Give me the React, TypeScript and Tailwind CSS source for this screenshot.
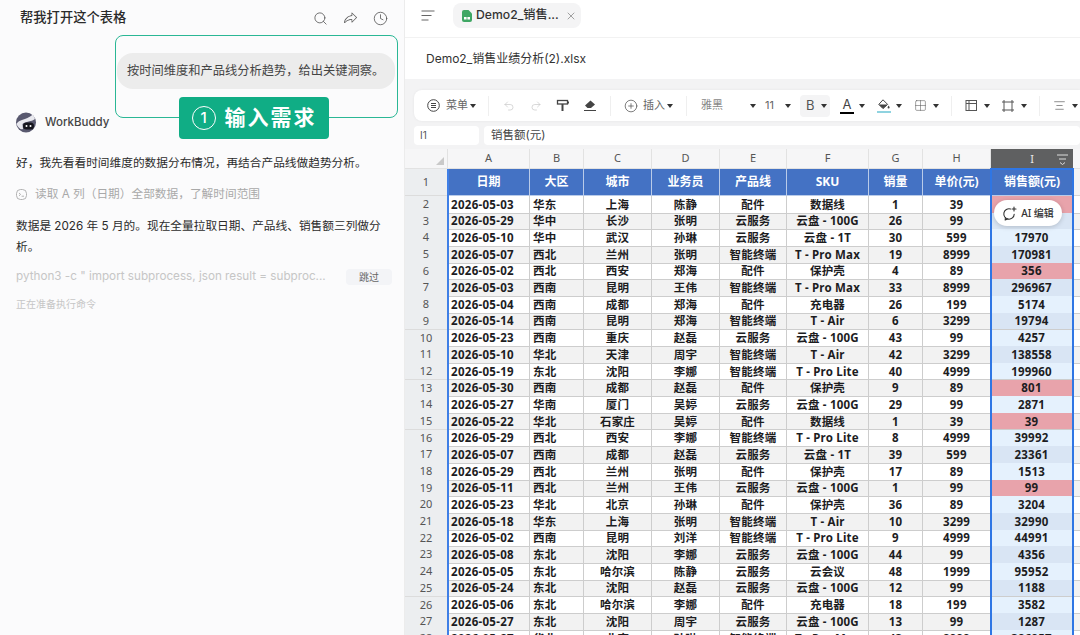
import React from 'react';
import { Search, Clock, X, Undo2, Redo2, CirclePlus, Grid2x2, AlignCenter } from 'lucide-react';
import { PiShareFatLight } from 'react-icons/pi';

type Row = [string, string, string, string, string, string, number, number, number];

const rows: Row[] = [
  ['2026-05-03', '华东', '上海', '陈静', '配件', '数据线', 1, 39, 39],
  ['2026-05-29', '华中', '长沙', '张明', '云服务', '云盘 - 100G', 26, 99, 2574],
  ['2026-05-10', '华中', '武汉', '孙琳', '云服务', '云盘 - 1T', 30, 599, 17970],
  ['2026-05-07', '西北', '兰州', '张明', '智能终端', 'T - Pro Max', 19, 8999, 170981],
  ['2026-05-02', '西北', '西安', '郑海', '配件', '保护壳', 4, 89, 356],
  ['2026-05-03', '西南', '昆明', '王伟', '智能终端', 'T - Pro Max', 33, 8999, 296967],
  ['2026-05-04', '西南', '成都', '郑海', '配件', '充电器', 26, 199, 5174],
  ['2026-05-14', '西南', '昆明', '郑海', '智能终端', 'T - Air', 6, 3299, 19794],
  ['2026-05-23', '西南', '重庆', '赵磊', '云服务', '云盘 - 100G', 43, 99, 4257],
  ['2026-05-10', '华北', '天津', '周宇', '智能终端', 'T - Air', 42, 3299, 138558],
  ['2026-05-19', '东北', '沈阳', '李娜', '智能终端', 'T - Pro Lite', 40, 4999, 199960],
  ['2026-05-30', '西南', '成都', '赵磊', '配件', '保护壳', 9, 89, 801],
  ['2026-05-27', '华南', '厦门', '吴婷', '云服务', '云盘 - 100G', 29, 99, 2871],
  ['2026-05-22', '华北', '石家庄', '吴婷', '配件', '数据线', 1, 39, 39],
  ['2026-05-29', '西北', '西安', '李娜', '智能终端', 'T - Pro Lite', 8, 4999, 39992],
  ['2026-05-07', '西南', '成都', '赵磊', '云服务', '云盘 - 1T', 39, 599, 23361],
  ['2026-05-29', '西北', '兰州', '张明', '配件', '保护壳', 17, 89, 1513],
  ['2026-05-11', '西北', '兰州', '王伟', '云服务', '云盘 - 100G', 1, 99, 99],
  ['2026-05-23', '华北', '北京', '孙琳', '配件', '保护壳', 36, 89, 3204],
  ['2026-05-18', '华东', '上海', '张明', '智能终端', 'T - Air', 10, 3299, 32990],
  ['2026-05-02', '西南', '昆明', '刘洋', '智能终端', 'T - Pro Lite', 9, 4999, 44991],
  ['2026-05-08', '东北', '沈阳', '李娜', '云服务', '云盘 - 100G', 44, 99, 4356],
  ['2026-05-05', '东北', '哈尔滨', '陈静', '云服务', '云会议', 48, 1999, 95952],
  ['2026-05-24', '东北', '沈阳', '赵磊', '云服务', '云盘 - 100G', 12, 99, 1188],
  ['2026-05-06', '东北', '哈尔滨', '李娜', '配件', '充电器', 18, 199, 3582],
  ['2026-05-27', '东北', '沈阳', '周宇', '云服务', '云盘 - 100G', 13, 99, 1287],
  ['2026-05-27', '华北', '北京', '孙琳', '智能终端', 'T - Pro Max', 43, 8999, 386957],
];

const columns = ['A', 'B', 'C', 'D', 'E', 'F', 'G', 'H'];
const titles = ['日期', '大区', '城市', '业务员', '产品线', 'SKU', '销量', '单价(元)'];
const gridCols = 'grid grid-cols-[43px_82px_54px_68px_68px_67px_82px_54px_68px_82px_7px]';
const cell = 'flex items-center justify-center border-r border-b border-[#cdcdcd] overflow-hidden whitespace-nowrap';

function Caret({ className = '' }: { className?: string }) {
  return (
    <span className={`inline-block h-0 w-0 border-x-[3px] border-t-[4px] border-x-transparent border-t-[#333] ${className}`} />
  );
}

function Sep({ className = '' }: { className?: string }) {
  return <span className={`h-5 w-px bg-[#efefef] ${className}`} />;
}

function Toolbar() {
  const icon = 'text-[#555]';
  return (
    <div className="ml-[9px] mt-[11px] flex h-[31px] shrink-0 items-center overflow-hidden whitespace-nowrap rounded-l-lg bg-white text-[11px] text-[#666] shadow-[0_0_3px_rgba(0,0,0,0.06)] [&>*]:shrink-0">
      <svg className="ml-[13px]" width="13" height="13" viewBox="0 0 13 13" fill="none" stroke="#444" strokeWidth="1">
        <circle cx="6.5" cy="6.5" r="5.8" />
        <path d="M4 4.5h5M4 6.5h5M4 8.5h5" />
      </svg>
      <span className="ml-[6px]">菜单</span>
      <Caret className="ml-[2px]" />
      <Sep className="ml-[12px]" />
      <Undo2 size={12} strokeWidth={1.3} className="ml-[14px] text-[#c4c4c4]" />
      <Redo2 size={12} strokeWidth={1.3} className="ml-[15px] text-[#c4c4c4]" />
      {/* format painter */}
      <svg className="ml-[14px]" width="13" height="13" viewBox="0 0 13 13" fill="none" stroke="#444" strokeWidth="1.3">
        <rect x="1.5" y="1.5" width="10" height="3.5" />
        <path d="M11.5 3.5H13M6.5 5v2M6.5 7v5" strokeWidth="2" />
      </svg>
      {/* eraser */}
      <svg className="ml-[14px]" width="14" height="13" viewBox="0 0 14 13">
        <path d="M7.5 1.5 12 5.5 8 9H4.5L2 6.5Z" fill="#444" />
        <path d="M1 11.5h12" stroke="#444" strokeWidth="1.2" />
      </svg>
      <Sep className="ml-[13px]" />
      <CirclePlus size={14} strokeWidth={1.3} className={`ml-[13px] ${icon}`} />
      <span className="ml-[5px]">插入</span>
      <Caret className="ml-[2px]" />
      <Sep className="ml-[13px]" />
      <span className="ml-[14px] text-[#888]">雅黑</span>
      <Caret className="ml-[27px]" />
      <span className="ml-[9px] w-[10px]">11</span>
      <Caret className="ml-[10px]" />
      <span className="ml-[9px] flex h-[22px] w-[30px] items-center gap-[6px] rounded bg-[#f4f4f5] pl-[6px] text-[13px] text-[#555]">
        B
        <Caret />
      </span>
      <span className="ml-[10px] flex w-[14px] flex-col items-center text-[13px] leading-[13px] text-[#444]">
        A
        <span className="mt-px h-[2px] w-[14px] bg-black" />
      </span>
      <Caret className="ml-[5px]" />
      <span className="ml-[12px] flex w-[14px] flex-col items-center">
        {/* fill bucket */}
        <svg width="12" height="11" viewBox="0 0 12 11">
          <path d="M5 .8 9.6 5.4 5 9.6.8 5.4Z" fill="none" stroke="#444" />
          <path d="M.8 5.4h8.8L5 9.6Z" fill="#444" />
          <path d="M10.6 6.5c.7 1 1 1.5 1 2a1 1 0 0 1-2 0c0-.5.3-1 1-2Z" fill="#444" />
        </svg>
        <span className="mt-px h-[2px] w-[14px] bg-[#8fd3e0]" />
      </span>
      <Caret className="ml-[5px]" />
      <Grid2x2 size={13} strokeWidth={1} className={`ml-[12px] ${icon}`} />
      <Caret className="ml-[6px]" />
      <Sep className="ml-[12px]" />
      <svg className="ml-[13px]" width="13" height="13" viewBox="0 0 13 13" fill="none" stroke="#555">
        <rect x="1" y="1.5" width="10.5" height="10" />
        <path d="M1 4.5h10.5M4 1.5v10" />
      </svg>
      <Caret className="ml-[6px]" />
      <svg className="ml-[11px]" width="14" height="14" viewBox="0 0 14 14" fill="none" stroke="#555">
        <path d="M1 3h12M1 11h12M3 1v12M11 1v12" />
      </svg>
      <Caret className="ml-[6px]" />
      <Sep className="ml-[12px]" />
      <AlignCenter size={13} strokeWidth={1.2} className={`ml-[13px] ${icon}`} />
      <Caret className="ml-[6px]" />
    </div>
  );
}

function Sheet() {
  return (
    <div className="relative mt-[4px] min-h-0 flex-1 overflow-hidden bg-white [font-family:'Noto_Sans','Noto_Sans_CJK_SC',sans-serif]">
      {/* column letters */}
      <div className={`${gridCols} h-[20px] bg-[#f6f6f7] text-[11px] text-[#555]`}>
        <div className="relative border-r border-b border-[#e2e2e2]">
          <span className="absolute right-[3px] bottom-[3px] h-0 w-0 border-b-[8px] border-l-[8px] border-b-[#c9c9c9] border-l-transparent" />
        </div>
        {columns.map((c) => (
          <div key={c} className="flex items-center justify-center border-r border-b border-[#e2e2e2]">{c}</div>
        ))}
        <div className="relative flex items-center justify-center bg-[#5f6061] text-[#e8e8e8]">
          I
          <svg className="absolute right-[4px] top-[4px]" width="13" height="13" viewBox="0 0 13 13" fill="none" stroke="#ddd">
            <path d="M1 2h11M3 6h7M4 9.5l2.5 2 2.5-2" />
          </svg>
        </div>
        <div className="border-b border-[#e2e2e2]" />
      </div>
      {/* title row */}
      <div className={`${gridCols} h-[27px] text-[12px] font-bold text-white`}>
        <div className="flex items-center justify-center border-r border-b border-[#dcdcdc] bg-[#eceef0] text-[11px] font-normal text-[#555]">1</div>
        {titles.map((t) => (
          <div key={t} className="flex items-center justify-center border-r border-b border-[#b9cbe9] bg-[#4472c4]">{t}</div>
        ))}
        <div className="flex items-center justify-center border-b border-[#b9cbe9] bg-[#4472c4]">销售额(元)</div>
        <div className="border-b border-[#d5d5d5] bg-[#f4f4f4]" />
      </div>
      {/* data rows */}
      <div>
        {rows.map((r, i) => {
          const striped = i % 2 === 1;
          const low = r[8] < 1000;
          return (
            <div key={i} className={`${gridCols} h-[16.7px] text-[11.5px] font-bold tracking-[0.2px] text-[#1d1d1f] ${striped ? 'bg-[#f2f2f2]' : 'bg-white'}`}>
              <div className="flex items-center justify-center border-r border-b border-[#dcdcdc] bg-[#eceef0] text-[11px] font-normal tracking-normal text-[#555]">{i + 2}</div>
              <div className={`${cell} justify-start! pl-[3px] tracking-[0.3px]`}>{r[0]}</div>
              <div className={`${cell} justify-start! pl-[3px]`}>{r[1]}</div>
              <div className={cell}>{r[2]}</div>
              <div className={cell}>{r[3]}</div>
              <div className={cell}>{r[4]}</div>
              <div className={cell}>{r[5]}</div>
              <div className={cell}>{r[6]}</div>
              <div className={cell}>{r[7]}</div>
              <div className={`${cell} ${low ? 'bg-[#e8a3ab]' : striped ? 'bg-[#d9e5f4]' : 'bg-[#e5f1fd]'}`}>{r[8]}</div>
              <div className="border-b border-[#cdcdcd]" />
            </div>
          );
        })}
      </div>
      {/* selection outlines and floating button */}
      <div className="pointer-events-none absolute left-[42px] top-[20px] bottom-0 w-[2px] bg-[#3f7fe6]" />
      <div className="pointer-events-none absolute left-[585px] top-[19px] -bottom-[4px] w-[84px] border-2 border-[#2f76e4]" />
      <div className="absolute left-[589px] top-[51px] flex h-[26px] w-[68px] items-center justify-center gap-[4px] rounded-full bg-white text-[10px] font-medium text-[#333] shadow-[0_1px_5px_rgba(0,0,0,0.18)]">
        <svg width="15" height="15" viewBox="0 0 15 15" fill="none" stroke="#333" strokeWidth="1.1" strokeLinecap="round" strokeLinejoin="round">
          <path d="M8.5 3A5.2 5.2 0 1 0 12.2 8.2" />
          <path d="M3.4 11.8 3.2 14l2.4-1" />
          <path d="M12 1v4M10 3h4" />
        </svg>
        AI 编辑
      </div>
    </div>
  );
}

function ChatPanel() {
  return (
    <aside className="relative flex w-[405px] shrink-0 flex-col border-r border-[#ececec] bg-[#fbfbfc] text-[#2b2b2b] [font-family:Inter,'Noto_Sans_CJK_SC',sans-serif]">
      <header className="flex h-[36px] items-center pl-[20px] pr-[16px]">
        <h1 className="flex-1 text-[13.3px] font-medium">帮我打开这个表格</h1>
        <Search size={15} strokeWidth={1.3} className="text-[#555]" />
        <PiShareFatLight size={15} className="ml-[15px] text-[#555]" />
        <Clock size={15} strokeWidth={1.3} className="ml-[15px] text-[#555]" />
      </header>
      <div className="mr-[9px] mt-[17px] w-[278px] self-end whitespace-nowrap rounded-2xl bg-[#ececec] px-[10px] py-[10px] text-[12.25px] leading-[16px] text-[#444]">
        按时间维度和产品线分析趋势，给出关键洞察。
      </div>
      <div className="mt-[23px] flex items-center pl-[16px]">
        <svg width="20" height="21" viewBox="0 0 20 21">
          <circle cx="10" cy="10.5" r="10" fill="#59596f" />
          <path d="M0.5 12C3 7 9 9 17 2.5L19 7C15 10 10 9 6.5 12L7 17C5 18 2 16 0.5 12Z" fill="#e8e8ee" />
          <rect x="7" y="10.5" width="11" height="7" rx="3.5" fill="#15151d" />
          <circle cx="10.5" cy="14" r="1" fill="#fff" />
          <circle cx="14.5" cy="14" r="1" fill="#fff" />
        </svg>
        <span className="ml-[9px] text-[11.5px] font-medium text-[#444]">WorkBuddy</span>
      </div>
      <p className="mt-[20px] pl-[16px] text-[11.7px] leading-[21px]">好，我先看看时间维度的数据分布情况，再结合产品线做趋势分析。</p>
      <div className="mt-[10px] flex h-[21px] items-center pl-[16px] text-[11.7px] text-[#a9a9a9]">
        <svg width="11" height="11" viewBox="0 0 11 11" fill="none" stroke="#a9a9a9" strokeWidth="0.9">
          <rect x="0.5" y="0.5" width="10" height="10" rx="4" />
          <path d="M3 4l1.6 1.4L3 6.8M5.6 7.2H8" />
        </svg>
        <span className="ml-[8px]">读取 A 列（日期）全部数据，了解时间范围</span>
      </div>
      <p className="mt-[11px] w-[384px] pl-[16px] text-[11.7px] leading-[21px]">数据是 2026 年 5 月的。现在全量拉取日期、产品线、销售额三列做分析。</p>
      <div className="mt-[9px] flex h-[20px] items-center pl-[16px] pr-[12px] text-[11.7px] text-[#c6c6c6]">
        <span className="flex-1">python3 -c " import subprocess, json result = subproc...</span>
        <span className="flex h-[16px] w-[46px] items-center justify-center rounded bg-[#f3f4f7] text-[10px] text-[#666]">跳过</span>
      </div>
      <p className="mt-[9px] pl-[16px] text-[10px] leading-[16px] text-[#c6c6c6]">正在准备执行命令</p>

      {/* step annotation laid over the chat */}
      <div className="pointer-events-none absolute left-[115px] top-[35px] h-[83px] w-[283px] rounded-lg border border-[#2ab795]" />
      <div className="absolute left-[179px] top-[97px] flex h-[42px] w-[150px] items-center justify-center gap-[9px] rounded-[4px] bg-[#10ad85] text-white">
        <span className="flex h-[24px] w-[24px] items-center justify-center rounded-full border border-white text-[15px] font-medium">1</span>
        <span className="text-[21px] font-bold tracking-[2px]">输入需求</span>
      </div>
    </aside>
  );
}

export default function App() {
  return (
    <div className="flex h-[635px] w-[1080px] overflow-hidden bg-white">
      <ChatPanel />
      <main className="flex min-w-0 flex-1 flex-col bg-[#f3f3f4] [font-family:Inter,'Noto_Sans_CJK_SC',sans-serif]">
        <div className="flex h-[38px] shrink-0 items-start border-b border-[#f2f2f2] bg-white pt-[3px]">
          <svg className="ml-[16px] mt-[7px]" width="14" height="11" viewBox="0 0 14 11" fill="none" stroke="#666" strokeWidth="1">
            <path d="M0.5 1h13M0.5 5.5h10M0.5 10h7" />
          </svg>
          <div className="ml-[18px] flex h-[25px] w-[128px] items-center rounded-lg bg-[#f4f4f5] pl-[9px] text-[12.2px] font-medium text-[#333]">
            <svg className="shrink-0" width="10" height="12" viewBox="0 0 10 12">
              <path d="M2 0h4.5L10 3.5V10a2 2 0 0 1-2 2H2a2 2 0 0 1-2-2V2a2 2 0 0 1 2-2Z" fill="#3fa764" />
              <path d="M2 7h2.6v2.6H2zM5.4 7H8v2.6H5.4z" fill="#fff" />
            </svg>
            <span className="ml-[4px] whitespace-nowrap">Demo2_销售...</span>
            <X size={12} strokeWidth={1.2} className="ml-[6px] shrink-0 text-[#666]" />
          </div>
        </div>
        <div className="flex h-[41px] shrink-0 items-center bg-white pl-[21px] text-[12px] text-[#333]">Demo2_销售业绩分析(2).xlsx</div>
        <Toolbar />
        <div className="ml-[9px] mt-[5px] flex h-[19px] shrink-0 gap-[5px] text-[11.5px] text-[#444]">
          <div className="flex w-[65px] items-center rounded-sm bg-white pl-[6px] text-[10px] text-[#555]">I1</div>
          <div className="flex flex-1 items-center rounded-sm bg-white pl-[7px] pt-px">销售额(元)</div>
        </div>
        <Sheet />
      </main>
    </div>
  );
}
